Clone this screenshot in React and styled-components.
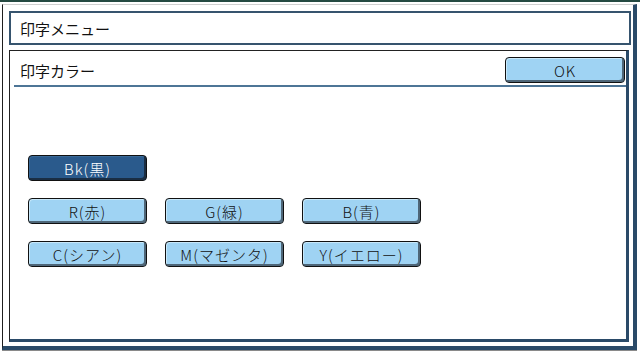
import styled, { createGlobalStyle } from "styled-components";

const Global = createGlobalStyle`
  html, body { margin: 0; padding: 0; background: #ffffff; }
  body { font-family: "Noto Sans CJK JP", "DejaVu Sans", sans-serif; }
`;

const Screen = styled.div`
  width: 640px;
  height: 351px;
  background: #ffffff;
  border-top: 2px solid #254a42;
  box-sizing: border-box;
  padding: 2px 3px 0 2px;
  display: flex;
`;

const Frame = styled.div`
  flex: 1;
  height: 346px;
  box-sizing: border-box;
  border-left: 1px solid #1e1e1e;
  border-top: 1px solid #d0d0d0;
  border-right: 4px solid #2a4a68;
  border-bottom: 4px solid #2a4a68;
  box-shadow: 0 1px 0 #8a8a8a;
  padding: 6px 2px 4px 6px;
  display: flex;
  flex-direction: column;
  gap: 5px;
`;

const TitleBox = styled.div`
  height: 34px;
  box-sizing: border-box;
  border: 2px solid #36546e;
  background: #ffffff;
  display: flex;
  align-items: center;
  padding-left: 9px;
  font-size: 15px;
  color: #111;
`;

const Panel = styled.div`
  width: 620px;
  flex: 1;
  box-sizing: border-box;
  border-left: 1px solid #222;
  border-top: 1px solid #222;
  border-right: 3px solid #2a4a68;
  border-bottom: 3px solid #2a4a68;
  background: #ffffff;
  padding: 4px 0 0 4px;
  display: flex;
  flex-direction: column;
`;

const Header = styled.div`
  height: 30px;
  border-bottom: 2px solid #4d7596;
  display: flex;
  align-items: center;
  justify-content: space-between;
  padding: 0 1px 0 6px;
  font-size: 15px;
  color: #111;
`;

const Grid = styled.div`
  margin: 68px 0 0 14px;
  display: grid;
  grid-template-columns: repeat(3, 119px);
  column-gap: 18px;
  row-gap: 17px;
`;

const Button = styled.div`
  width: ${(p) => p.$w || 119}px;
  height: 26px;
  box-sizing: border-box;
  border: 1px solid #111;
  border-radius: 4px;
  background: ${(p) => (p.$active ? "#2a5a8c" : "#9fd3f3")};
  color: ${(p) => (p.$active ? "#ffffff" : "#111")};
  box-shadow: inset -2px -2px 0 ${(p) => (p.$active ? "#1a2e44" : "#4e6678")},
    inset 1px 1px 0 ${(p) => (p.$active ? "#3a6a98" : "#c8e8fa")};
  display: flex;
  align-items: center;
  justify-content: center;
  font-size: 15px;
  font-weight: 300;
  letter-spacing: 1px;
  grid-column: ${(p) => (p.$full ? "1 / -1" : "auto")};
`;

const buttons = [
  ["R(赤)", "G(緑)", "B(青)"],
  ["C(シアン)", "M(マゼンタ)", "Y(イエロー)"],
];

export default function App() {
  return (
    <>
      <Global />
      <Screen>
        <Frame>
          <TitleBox>印字メニュー</TitleBox>
          <Panel>
            <Header>
              <span>印字カラー</span>
              <Button $w={120}>OK</Button>
            </Header>
            <Grid>
              <Button $active $full>
                Bk(黒)
              </Button>
              {buttons.flat().map((b) => (
                <Button key={b}>{b}</Button>
              ))}
            </Grid>
          </Panel>
        </Frame>
      </Screen>
    </>
  );
}
